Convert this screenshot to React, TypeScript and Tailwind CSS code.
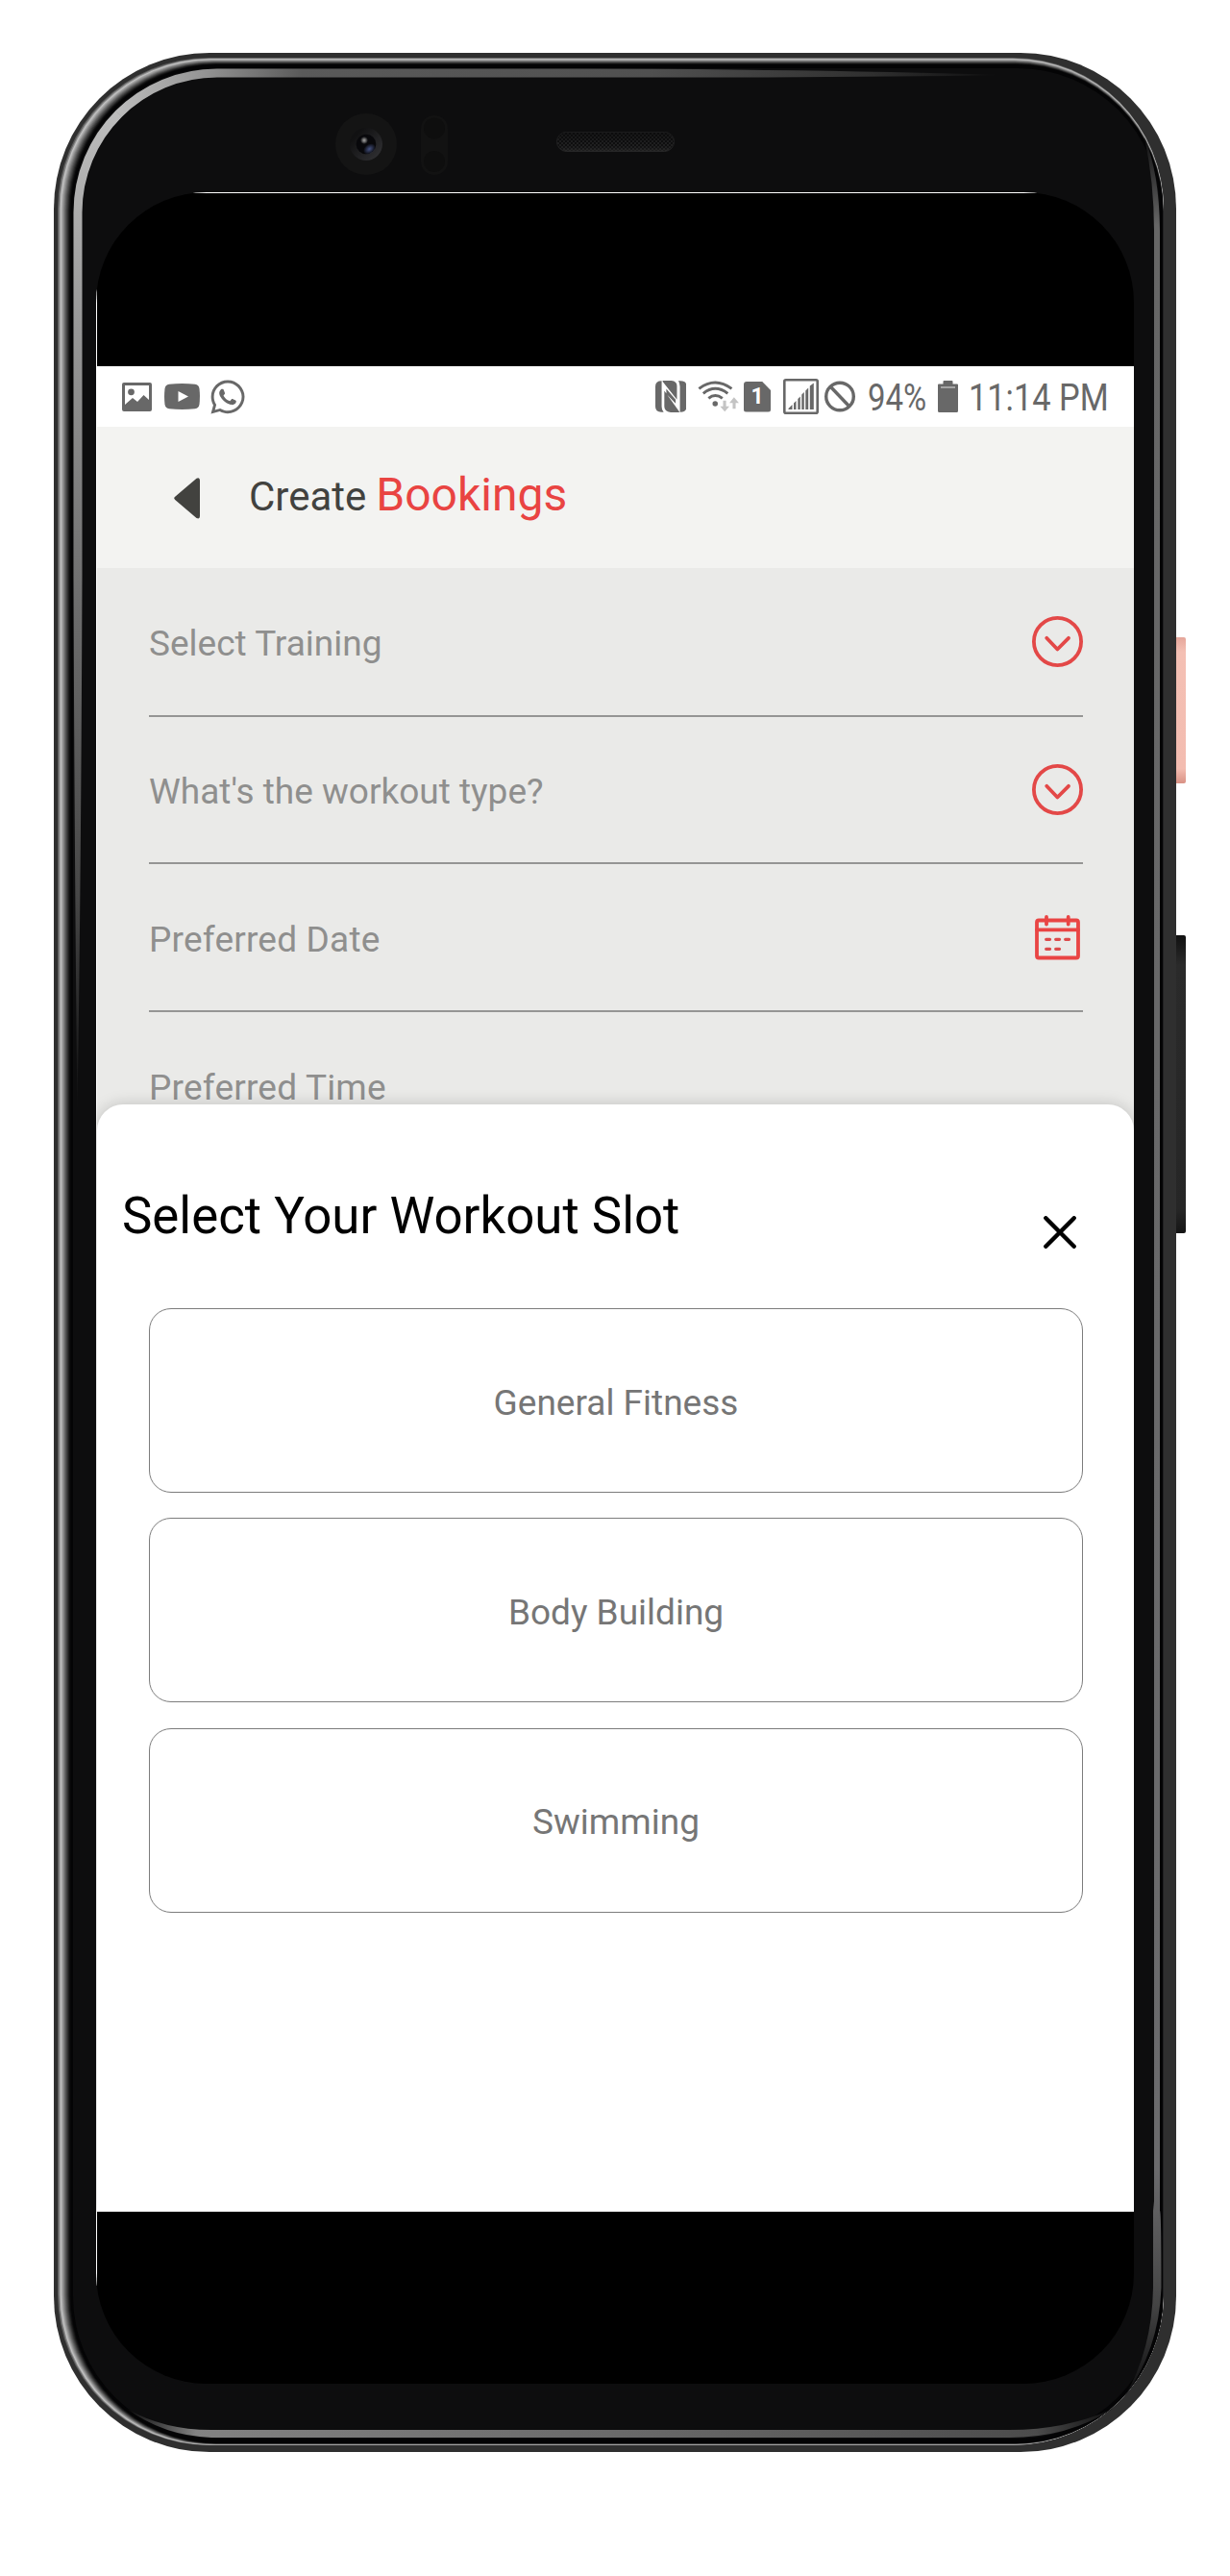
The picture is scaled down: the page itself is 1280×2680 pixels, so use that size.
import type { ReactNode } from "react";
import { FaWhatsapp } from "react-icons/fa";

/* Rim shading: nested rounded rects that shrink faster on the lit (top left) side. */
const rimLayers: [number, string][] = [
  [0, "#5c5c5c"],
  [0.1, "#8e8e8e"],
  [0.19, "#c2c2c2"],
  [0.28, "#adadad"],
  [0.36, "#979797"],
  [0.44, "#808080"],
  [0.52, "#6a6a6a"],
  [0.6, "#545454"],
  [0.68, "#404040"],
  [0.76, "#2c2c2c"],
  [0.84, "#191919"],
  [0.92, "#0b0b0c"],
  [1, "#040405"],
];

function PhoneFrame() {
  return (
    <svg className="absolute inset-0" width="1280" height="2680" viewBox="0 0 1280 2680" aria-hidden="true">
      <defs>
        <linearGradient id="leftBand" gradientUnits="userSpaceOnUse" x1="0" y1="115" x2="0" y2="1160">
          <stop offset="0" stopColor="#bdbdbd" />
          <stop offset="0.22" stopColor="#979797" />
          <stop offset="0.5" stopColor="#6c6c6c" />
          <stop offset="0.78" stopColor="#474747" />
          <stop offset="1" stopColor="#0d0d0e" />
        </linearGradient>
        <linearGradient id="topBand" gradientUnits="userSpaceOnUse" x1="120" y1="0" x2="1045" y2="0">
          <stop offset="0" stopColor="#bdbdbd" />
          <stop offset="0.1" stopColor="#949494" />
          <stop offset="0.21" stopColor="#5a5a5a" />
          <stop offset="0.6" stopColor="#505050" />
          <stop offset="0.85" stopColor="#303030" />
          <stop offset="1" stopColor="#0d0d0e" />
        </linearGradient>
        <linearGradient id="rightBand" gradientUnits="userSpaceOnUse" x1="0" y1="140" x2="0" y2="2492">
          <stop offset="0" stopColor="#0d0d0e" />
          <stop offset="0.04" stopColor="#666666" />
          <stop offset="0.9" stopColor="#6b6b6d" />
          <stop offset="0.96" stopColor="#444444" />
          <stop offset="1" stopColor="#0d0d0e" />
        </linearGradient>
        <linearGradient id="bottomBand" gradientUnits="userSpaceOnUse" x1="132" y1="0" x2="1160" y2="0">
          <stop offset="0" stopColor="#0d0d0e" />
          <stop offset="0.07" stopColor="#828282" />
          <stop offset="0.5" stopColor="#6a6a6a" />
          <stop offset="0.92" stopColor="#4c4c4c" />
          <stop offset="1" stopColor="#0d0d0e" />
        </linearGradient>
        <linearGradient id="powerKey" x1="0" y1="0" x2="0" y2="1">
          <stop offset="0" stopColor="#e5a69a" />
          <stop offset="0.1" stopColor="#f4c0b4" />
          <stop offset="0.9" stopColor="#f3bcb0" />
          <stop offset="1" stopColor="#d99285" />
        </linearGradient>
        <linearGradient id="volumeKey" x1="0" y1="0" x2="0" y2="1">
          <stop offset="0" stopColor="#111111" />
          <stop offset="0.1" stopColor="#2a2a2a" />
          <stop offset="0.92" stopColor="#262626" />
          <stop offset="1" stopColor="#151515" />
        </linearGradient>
        <linearGradient id="lensRing" x1="0" y1="0" x2="1" y2="1">
          <stop offset="0.2" stopColor="#111112" />
          <stop offset="1" stopColor="#343437" />
        </linearGradient>
        <linearGradient id="speakerShade" x1="0" y1="0" x2="0" y2="1">
          <stop offset="0" stopColor="#0a0a0a" stopOpacity="0.55" />
          <stop offset="0.6" stopColor="#0a0a0a" stopOpacity="0.1" />
          <stop offset="1" stopColor="#333333" stopOpacity="0.5" />
        </linearGradient>
        <radialGradient id="lensBlue">
          <stop offset="0" stopColor="#465383" />
          <stop offset="1" stopColor="#465383" stopOpacity="0" />
        </radialGradient>
        <radialGradient id="lensGlint">
          <stop offset="0.2" stopColor="#8c8c8c" />
          <stop offset="1" stopColor="#8c8c8c" stopOpacity="0" />
        </radialGradient>
        <pattern id="mesh" width="4" height="4" patternUnits="userSpaceOnUse">
          <rect width="4" height="4" fill="#0e0e0f" />
          <rect width="2" height="2" fill="#222223" />
          <rect x="2" y="2" width="2" height="2" fill="#222223" />
        </pattern>
      </defs>

      <rect x="1216" y="663" width="18" height="152" rx="2" fill="url(#powerKey)" />
      <rect x="1216" y="973" width="18" height="310" rx="2" fill="url(#volumeKey)" />

      <rect x="56" y="55" width="1168" height="2496" rx="162" fill="#2f2f2f" />
      {rimLayers.map(([t, fill]) => (
        <rect
          key={t}
          x={60 + 13.5 * t}
          y={60 + 7 * t}
          width={1151 - 14.3 * t}
          height={2484 - 9.2 * t}
          rx={157 - 4 * t}
          fill={fill}
        />
      ))}
      <rect x="76" y="71" width="1131" height="2466" rx="148" fill="#0d0d0e" />

      <path
        d="M76.5 221A149.5 149.5 0 0 1 120.3 115.3L126.7 121.7A140.5 140.5 0 0 0 85.5 221V600Q84.5 900 80.5 1160Q77.5 900 76.5 600Z"
        fill="url(#leftBand)"
      />
      <path
        d="M120 115.6A149.5 149.5 0 0 1 226 71.5H600Q850 72 1045 78Q850 81 600 80.5H226A140.5 140.5 0 0 0 126.4 122Z"
        fill="url(#topBand)"
      />
      <path
        d="M1191 143Q1206.5 180 1207 240V2300Q1208.5 2300 1208.5 2380Q1206 2445 1170 2494Q1199 2445 1200 2380V2300L1201 2290V240Q1201 190 1191 143Z"
        fill="url(#rightBand)"
      />
      <path
        d="M132 2506Q170 2528 220 2528H1050Q1110 2528 1158 2506Q1112 2536 1050 2536H220Q170 2534 132 2506Z"
        fill="url(#bottomBand)"
      />

      <circle cx="381" cy="150" r="32" fill="#141414" />
      <circle cx="381" cy="150" r="17" fill="url(#lensRing)" />
      <circle cx="381" cy="150" r="10.3" fill="#08080b" />
      <ellipse cx="384.5" cy="155" rx="7" ry="5" transform="rotate(-35 384.5 155)" fill="url(#lensBlue)" />
      <circle cx="379" cy="146" r="4" fill="url(#lensGlint)" />
      <rect x="438" y="120" width="28" height="62" rx="14" fill="#121212" />
      <circle cx="452" cy="133.5" r="11" fill="#0e0e0e" />
      <circle cx="452" cy="168" r="11" fill="#0e0e0e" />
      <rect x="579.5" y="137.5" width="122" height="20" rx="10" fill="url(#mesh)" stroke="#222223" />
      <rect x="579.5" y="137.5" width="122" height="20" rx="10" fill="url(#speakerShade)" />
    </svg>
  );
}

function StatusBar() {
  return (
    <div className="flex h-[63px] items-center bg-white pr-[27px] pl-[26px] text-[#686868]">
      <svg className="w-[31px]" height="30" viewBox="0 0 31 30" fill="currentColor">
        <path
          fillRule="evenodd"
          d="M2 0H29A2 2 0 0 1 31 2V28A2 2 0 0 1 29 30H2A2 2 0 0 1 0 28V2A2 2 0 0 1 2 0ZM3 3V23L11 16L16 20L22.5 13L28 18V3Z"
        />
        <circle cx="9.5" cy="9.8" r="3.4" />
      </svg>
      <svg className="ml-[13px] w-[37px]" height="27" viewBox="0 0 37 27">
        <path
          d="M5 .8Q18.5-.7 32 .8Q36 1.300 36.5 5.5Q37.4 13.5 36.5 21.5Q36 25.700 32 26.2Q18.5 27.700 5 26.2Q1 25.700.5 21.5Q-.4 13.5.5 5.5Q1 1.300 5 .8Z"
          fill="currentColor"
        />
        <path d="M14.5 8V19L25 13.5Z" fill="#fff" />
      </svg>
      <FaWhatsapp className="ml-[9px] h-[40px] w-[40px]" />

      <svg className="ml-auto" width="32.5" height="33" viewBox="62 78 94 100" preserveAspectRatio="none" fill="currentColor">
        <path d="M81 79Q62 79 62 96V160Q62 177 80 177H87Q81 172 81 160V79Z" />
        <path d="M138 177Q156 177 156 160V96Q156 79 138 79H131Q136 84 136 96V177Z" />
        <path d="M84 78H110Q127 80 127 94V138L84 81ZM95 120V104L123 138V150ZM134 178H108Q89 175 89 160V110L134 176Z" />
      </svg>
      <svg className="ml-[12px]" width="43" height="33" viewBox="190 78 125 99" preserveAspectRatio="none" fill="none">
        <g stroke="currentColor" strokeWidth="8.5">
          <path d="M194 103Q243 65 293 103" />
          <path d="M207 118Q243 88 281 118" />
          <path d="M223 133Q243 116 265 133" />
        </g>
        <circle cx="243" cy="150" r="8" fill="currentColor" />
        <path d="M267 140H276V158H286L272 175L258 158H267ZM296 166V148H286L300 130L315 148H305V166Z" fill="#c4c4c4" />
      </svg>
      <div className="ml-[5px] flex h-[32px] w-[28px] items-center justify-center rounded-[3px] bg-[#686868] text-[23px] leading-none font-bold text-white [clip-path:polygon(0_0,67%_0,100%_30%,100%_100%,0_100%)]">
        1
      </div>
      <svg className="ml-[13px]" width="37" height="37" viewBox="0 0 37 37" fill="none">
        <rect x="1.3" y="1.3" width="34.4" height="34.4" rx="1.5" stroke="currentColor" strokeWidth="2.6" />
        <path
          d="M5.5 32V31L9.5 27V32ZM11 32V25.5L13.5 23V32ZM15.3 32V21L17.8 18.5V32ZM19.3 32V16.5L21.8 14V32ZM23.3 32V12.5L26.2 9.5V32ZM27.8 32V7.5L31.8 4.5V32Z"
          fill="currentColor"
        />
      </svg>
      <svg className="ml-[6px]" width="32" height="33" viewBox="0 0 32 33" fill="none" stroke="currentColor" strokeWidth="3.4">
        <circle cx="16" cy="16.5" r="14.3" />
        <path d="M6 6L26 27" />
      </svg>
      <span className="mt-[4px] ml-[13px] block w-[62px] origin-left scale-x-[0.845] text-[39px] leading-none whitespace-nowrap">
        94%
      </span>
      <svg className="ml-[11px]" width="21" height="33" viewBox="0 0 21 33">
        <path d="M5.5 1Q5.5 0 6.5 0H14.5Q15.5 0 15.5 1V3.5H20Q21 3.5 21 4.5V31.5Q21 33 19.5 33H1.5Q0 33 0 31.5V4.5Q0 3.5 1 3.5H5.5Z" fill="currentColor" />
        <path d="M3 7H18" stroke="#e4e4e4" />
      </svg>
      <span className="mt-[4px] ml-[11px] block w-[145px] origin-left scale-x-[0.88] text-[39px] leading-none whitespace-nowrap">
        11:14 PM
      </span>
    </div>
  );
}

function Header() {
  return (
    <header className="flex h-[147px] items-center bg-[#f3f3f1] pl-[80px]">
      <svg className="mt-[2px]" width="27" height="43" viewBox="0 0 27 43" fill="#42423f">
        <path d="M23.5 .7Q27 -.8 27 2.800V40Q27 43.600 23.5 42L1.200 23Q-.8 21.300 1.200 19.700Z" />
      </svg>
      <h1 className="mb-[5px] ml-[51px] flex items-baseline text-[42px] leading-none text-[#42423f]">
        Create
        <span className="ml-[10px] text-[48px] text-[#e94442]">Bookings</span>
      </h1>
    </header>
  );
}

function ChevronIcon() {
  return (
    <svg width="53" height="53" viewBox="0 0 53 53" fill="none" stroke="#e34847" strokeLinecap="round" strokeLinejoin="round">
      <circle cx="26.5" cy="26.5" r="24.6" strokeWidth="3.8" />
      <path d="M15.2 22.8L26.4 34.5L38 22.8" strokeWidth="3.8" />
    </svg>
  );
}

function CalendarIcon() {
  return (
    <svg width="53" height="53" viewBox="0 0 53 53" fill="none" stroke="#e94544" strokeWidth="3.8" strokeLinecap="round">
      <rect x="5" y="8.5" width="43" height="39" rx="2" />
      <path d="M5 18.300H48M15 5V12.500M37.700 5V12.500" />
      <path d="M14.700 28.300H18.500M24.700 28.300H28.500M34.700 28.300H38.500M14.700 38.300H18.500M24.700 38.300H28.500" stroke="#dc4b4b" strokeWidth="3.3" />
    </svg>
  );
}

function Field({ label, icon, className }: { label: string; icon?: ReactNode; className: string }) {
  return (
    <div className={`flex items-center justify-between border-b-2 border-[#959594] ${className}`}>
      <span className="pt-[4px] text-[37px] leading-none text-[#8f8f8e]">{label}</span>
      {icon}
    </div>
  );
}

const slots = ["General Fitness", "Body Building", "Swimming"];

function SlotSheet() {
  return (
    <section className="relative -mt-[57px] h-[1152px] rounded-t-[27px] bg-white shadow-[0_0_16px_rgba(0,0,0,0.18)]">
      <div className="flex items-start justify-between pt-[86px] pr-[60px] pl-[26px]">
        <h2 className="text-[52.8px] leading-[60px] text-black">Select Your Workout Slot</h2>
        <svg className="mt-[30px]" width="34" height="34" viewBox="0 0 34 34" stroke="#000" strokeWidth="4.4" strokeLinecap="round">
          <path d="M2.300 2.300L31.700 31.700M31.700 2.300L2.300 31.700" />
        </svg>
      </div>
      <div className="mt-[62px] flex flex-col gap-[26.4px] pr-[53px] pl-[54px]">
        {slots.map((slot) => (
          <button
            key={slot}
            className="h-[192px] rounded-[23px] border border-[#7c7c7c] pt-[4px] text-[37px] leading-none text-[#767676]"
          >
            {slot}
          </button>
        ))}
      </div>
    </section>
  );
}

export default function App() {
  return (
    <div className="relative h-[2680px] w-[1280px] overflow-hidden bg-white pt-[200px] pl-[100px] font-[Roboto,sans-serif]">
      <PhoneFrame />
      <main className="relative h-[2280px] w-[1080px] overflow-hidden rounded-[115px] bg-black pt-px pl-px">
        <div className="absolute top-0 right-[100px] left-[100px] h-px bg-white" />
        <div className="absolute top-[97px] bottom-[102px] left-0 w-px bg-white" />
        <div className="h-[180px]" />
        <StatusBar />
        <Header />
        <div className="h-[615px] overflow-hidden bg-[#eaeae8] pr-[53px] pl-[54px]">
          <Field className="h-[155px]" label="Select Training" icon={<ChevronIcon />} />
          <Field className="h-[153px]" label="What's the workout type?" icon={<ChevronIcon />} />
          <Field className="h-[154px] tracking-[0.2px]" label="Preferred Date" icon={<CalendarIcon />} />
          <Field className="h-[154px] tracking-[0.2px]" label="Preferred Time" />
        </div>
        <SlotSheet />
        <div className="h-[180px]" />
      </main>
    </div>
  );
}
